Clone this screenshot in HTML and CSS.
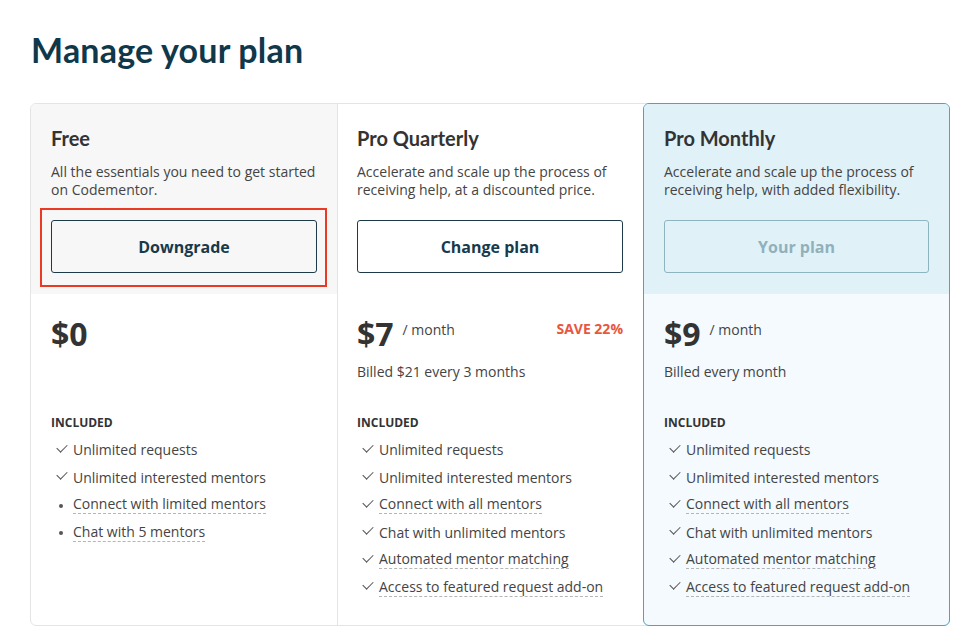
FILE: index.html
```html
<!DOCTYPE html>
<html lang="en">
<head>
<meta charset="utf-8">
<title>Manage your plan</title>
<link rel="stylesheet" href="styles.css">
</head>
<body>
<main class="page">
  <h1 class="title">Manage your plan</h1>
  <div class="plans">
    <section class="plan plan-free">
      <div class="plan-head">
        <h2 class="plan-name">Free</h2>
        <p class="plan-desc">All the essentials you need to get started on Codementor.</p>
        <div class="btn-wrap highlighted"><button class="btn">Downgrade</button></div>
      </div>
      <div class="plan-body">
        <div class="price-row"><span class="price">$0</span></div>
        <div class="billed"></div>
        <h3 class="included">Included</h3>
        <ul class="features">
          <li><span class="ico check"></span><span>Unlimited requests</span></li>
          <li><span class="ico check"></span><span>Unlimited interested mentors</span></li>
          <li><span class="ico dot"></span><span class="dashed">Connect with limited mentors</span></li>
          <li><span class="ico dot"></span><span class="dashed">Chat with 5 mentors</span></li>
        </ul>
      </div>
    </section>
    <section class="plan plan-quarterly">
      <div class="plan-head">
        <h2 class="plan-name">Pro Quarterly</h2>
        <p class="plan-desc">Accelerate and scale up the process of receiving help, at a discounted price.</p>
        <div class="btn-wrap"><button class="btn">Change plan</button></div>
      </div>
      <div class="plan-body">
        <div class="price-row"><span class="price">$7</span><span class="per">/ month</span><span class="save">SAVE 22%</span></div>
        <div class="billed">Billed $21 every 3 months</div>
        <h3 class="included">Included</h3>
        <ul class="features">
          <li><span class="ico check"></span><span>Unlimited requests</span></li>
          <li><span class="ico check"></span><span>Unlimited interested mentors</span></li>
          <li><span class="ico check"></span><span class="dashed">Connect with all mentors</span></li>
          <li><span class="ico check"></span><span>Chat with unlimited mentors</span></li>
          <li><span class="ico check"></span><span class="dashed">Automated mentor matching</span></li>
          <li><span class="ico check"></span><span class="dashed">Access to featured request add-on</span></li>
        </ul>
      </div>
    </section>
    <section class="plan plan-monthly">
      <div class="plan-head">
        <h2 class="plan-name">Pro Monthly</h2>
        <p class="plan-desc">Accelerate and scale up the process of receiving help, with added flexibility.</p>
        <div class="btn-wrap"><button class="btn btn-current" disabled>Your plan</button></div>
      </div>
      <div class="plan-body">
        <div class="price-row"><span class="price">$9</span><span class="per">/ month</span></div>
        <div class="billed">Billed every month</div>
        <h3 class="included">Included</h3>
        <ul class="features">
          <li><span class="ico check"></span><span>Unlimited requests</span></li>
          <li><span class="ico check"></span><span>Unlimited interested mentors</span></li>
          <li><span class="ico check"></span><span class="dashed">Connect with all mentors</span></li>
          <li><span class="ico check"></span><span>Chat with unlimited mentors</span></li>
          <li><span class="ico check"></span><span class="dashed">Automated mentor matching</span></li>
          <li><span class="ico check"></span><span class="dashed">Access to featured request add-on</span></li>
        </ul>
      </div>
    </section>
  </div>
</main>
</body>
</html>
```

FILE: styles.css
```css
* { box-sizing: border-box; }
html, body { margin: 0; padding: 0; background: #fff; }
body {
  font-family: "Open Sans", "Liberation Sans", sans-serif;
  color: #444;
  font-size: 14px;
}
.page { padding: 30px 30px 0 30px; }
.title {
  font-family: Lato, "Open Sans", sans-serif;
  font-weight: 700;
  font-size: 34px;
  line-height: 40px;
  color: #10384b;
  margin: 0 0 33px 1px;
  letter-spacing: 0.2px;
}
.plans {
  display: grid;
  grid-template-columns: 306px 306px 306px;
  border: 1px solid #e4e4e4;
  border-radius: 6px;
  width: 920px;
}
.plan { display: flex; flex-direction: column; }
.plan-free { border-radius: 5px 0 0 5px; overflow: hidden; }
.plan-free .plan-head { background: #f7f7f7; }
.plan-quarterly { border-left: 1px solid #e4e4e4; }
.plan-monthly {
  margin: -1px -1px -1px 0;
  border: 1px solid #4ba3c7;
  border-radius: 6px;
  overflow: hidden;
  background: #f4fafd;
}
.plan-monthly .plan-head { background: #e1f1f8; }
.plan-head { padding: 20px 20px 20px 20px; height: 190px; }
.plan-quarterly .plan-head { padding-left: 19px; }
.plan-name {
  font-family: Lato, "Open Sans", sans-serif;
  font-weight: 700;
  font-size: 20px;
  line-height: 28px;
  color: #333;
  margin: 0;
}
.plan-desc {
  margin: 11px 0 0 0;
  font-size: 14px;
  line-height: 18px;
  color: #444;
}
.btn-wrap { position: relative; margin-top: 21px; }
.highlighted::after {
  content: "";
  position: absolute;
  left: -11px;
  right: -10px;
  top: -12px;
  bottom: -14px;
  border: 2px solid #ea3a24;
}
.btn {
  display: block;
  width: 100%;
  height: 53px;
  border: 1px solid #1d3a48;
  border-radius: 3px;
  background: transparent;
  font-family: "Open Sans", "Liberation Sans", sans-serif;
  font-weight: 700;
  font-size: 16px;
  color: #173a4c;
  padding: 0;
}
.btn-current {
  border-color: #8fb4c1;
  color: #8fb1bc;
}
.plan-body { padding: 20px 20px 24px 20px; flex: 1; }
.plan-quarterly .plan-body { padding-left: 19px; }
.price-row { display: flex; align-items: flex-start; height: 41px; }
.price {
  font-weight: 700;
  font-size: 32px;
  line-height: 40px;
  color: #333;
}
.per {
  font-size: 14px;
  line-height: 20px;
  margin: 6px 0 0 9px;
  color: #444;
}
.save {
  margin-left: auto;
  margin-top: 5px;
  font-weight: 700;
  font-size: 14px;
  line-height: 20px;
  color: #e85640;
}
.billed {
  margin-top: 7px;
  height: 20px;
  line-height: 20px;
  font-size: 14px;
  color: #444;
}
.included {
  margin: 33px 0 0 0;
  font-size: 12px;
  line-height: 16px;
  font-weight: 700;
  text-transform: uppercase;
  color: #333;
}
.features {
  list-style: none;
  margin: 5px 0 0 0;
  padding: 0;
}
.features li {
  display: flex;
  align-items: center;
  height: 27.5px;
  font-size: 14px;
  color: #444;
}
.ico {
  flex: none;
  width: 22px;
  height: 12px;
  position: relative;
}
.check::before {
  content: "";
  position: absolute;
  left: 6px;
  top: 0px;
  width: 9px;
  height: 5px;
  border-left: 1px solid #555;
  border-bottom: 1px solid #555;
  transform: rotate(-45deg);
  transform-origin: center;
}
.dot::before {
  content: "";
  position: absolute;
  left: 8px;
  top: 5px;
  width: 4px;
  height: 4px;
  border-radius: 50%;
  background: #555;
}
.dashed {
  border-bottom: 1px dashed #b5b5b5;
  line-height: 18px;
}
```
